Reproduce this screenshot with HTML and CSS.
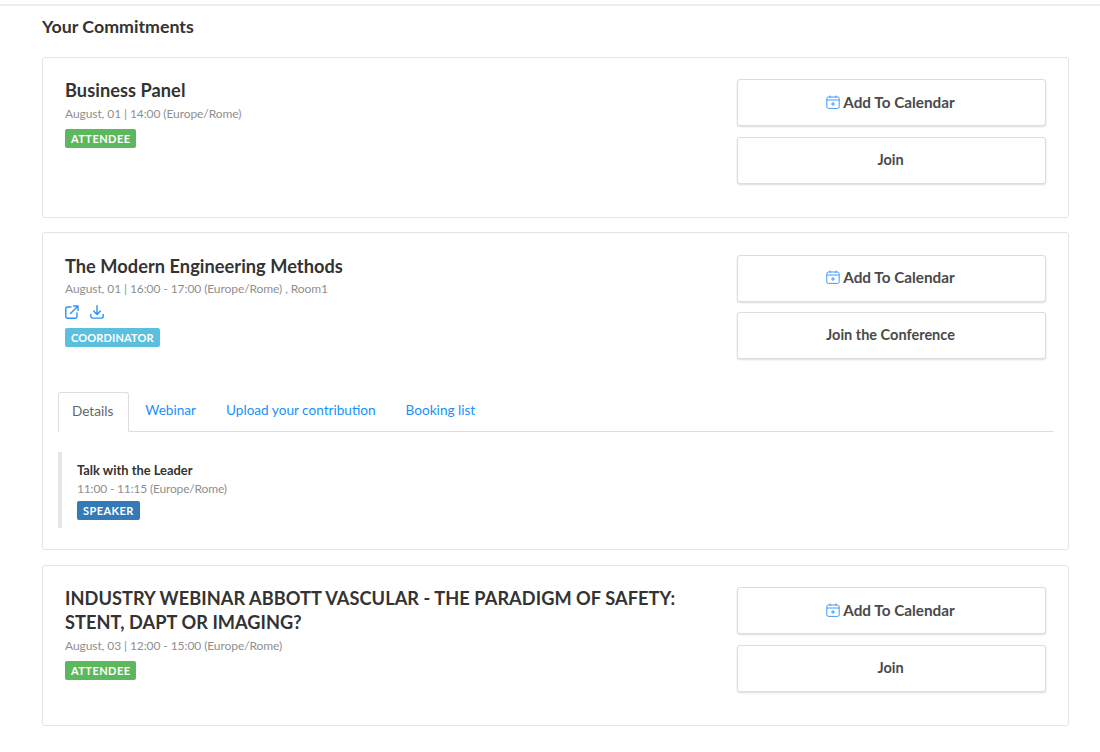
FILE: index.html
```html
<!DOCTYPE html>
<html lang="en">
<head>
<meta charset="utf-8">
<title>Your Commitments</title>
<link rel="stylesheet" href="styles.css">
</head>
<body>
<div class="topline"></div>
<main class="page">
  <h2 class="heading">Your Commitments</h2>

  <section class="card">
    <div class="row">
      <div class="info">
        <h3 class="title">Business Panel</h3>
        <p class="meta">August, 01 | 14:00 (Europe/Rome)</p>
        <span class="badge green">ATTENDEE</span>
      </div>
      <div class="actions">
        <button class="btn btn-cal"><svg class="cal" viewBox="0 0 14 14" width="14" height="14" fill="none" stroke="#3d9bff" stroke-width="1"><rect x="0.8" y="2" width="12.4" height="11.4" rx="1.6"/><path d="M0.8 5h12.4M4 0.5v2.5M10 0.5v2.5M7 7v4M5 9h4"/></svg><span>Add To Calendar</span></button>
        <button class="btn">Join</button>
      </div>
    </div>
  </section>

  <section class="card card-wide">
    <div class="row">
      <div class="info">
        <h3 class="title">The Modern Engineering Methods</h3>
        <p class="meta">August, 01 | 16:00 - 17:00 (Europe/Rome) , Room1</p>
        <div class="links">
          <svg viewBox="0 0 14 14" width="14" height="14" fill="none" stroke="#2e90fa" stroke-width="1.4" stroke-linecap="round" stroke-linejoin="round"><path d="M6 2H2.2A1.4 1.4 0 0 0 .8 3.4v8.4a1.4 1.4 0 0 0 1.4 1.4h8.4a1.4 1.4 0 0 0 1.4-1.4V8"/><path d="M5.5 8.5 13 1M8.6 1H13v4.4"/></svg>
          <svg viewBox="0 0 14 14" width="14" height="14" fill="none" stroke="#2e90fa" stroke-width="1.4" stroke-linecap="round" stroke-linejoin="round"><path d="M7 .8v8.4M3.6 6 7 9.4 10.4 6"/><path d="M.8 9.5v1.8a1.8 1.8 0 0 0 1.8 1.8h8.8a1.8 1.8 0 0 0 1.8-1.8V9.5"/></svg>
        </div>
        <span class="badge cyan">COORDINATOR</span>
      </div>
      <div class="actions">
        <button class="btn btn-cal"><svg class="cal" viewBox="0 0 14 14" width="14" height="14" fill="none" stroke="#3d9bff" stroke-width="1"><rect x="0.8" y="2" width="12.4" height="11.4" rx="1.6"/><path d="M0.8 5h12.4M4 0.5v2.5M10 0.5v2.5M7 7v4M5 9h4"/></svg><span>Add To Calendar</span></button>
        <button class="btn">Join the Conference</button>
      </div>
    </div>
    <nav class="tabs">
      <a class="tab active">Details</a>
      <a class="tab">Webinar</a>
      <a class="tab">Upload your contribution</a>
      <a class="tab">Booking list</a>
    </nav>
    <div class="talk">
      <h4 class="talk-title">Talk with the Leader</h4>
      <p class="meta talk-meta">11:00 - 11:15 (Europe/Rome)</p>
      <span class="badge blue">SPEAKER</span>
    </div>
  </section>

  <section class="card">
    <div class="row">
      <div class="info">
        <h3 class="title">INDUSTRY WEBINAR ABBOTT VASCULAR - THE PARADIGM OF SAFETY: STENT, DAPT OR IMAGING?</h3>
        <p class="meta">August, 03 | 12:00 - 15:00 (Europe/Rome)</p>
        <span class="badge green">ATTENDEE</span>
      </div>
      <div class="actions">
        <button class="btn btn-cal"><svg class="cal" viewBox="0 0 14 14" width="14" height="14" fill="none" stroke="#3d9bff" stroke-width="1"><rect x="0.8" y="2" width="12.4" height="11.4" rx="1.6"/><path d="M0.8 5h12.4M4 0.5v2.5M10 0.5v2.5M7 7v4M5 9h4"/></svg><span>Add To Calendar</span></button>
        <button class="btn">Join</button>
      </div>
    </div>
  </section>
</main>
</body>
</html>
```
FILE: styles.css
```css
* { box-sizing: border-box; }
html, body { margin: 0; padding: 0; background: #fff; }
body { font-family: "Lato", "Open Sans", sans-serif; color: #333; height: 752px; overflow: hidden; }
.topline { height: 6px; border-bottom: 2px solid #eee; }
.page { padding: 0 31px 0 42px; }
.heading { margin: 0; padding-top: 11px; height: 51px; font-size: 17.8px; line-height: 19px; font-weight: 700; color: #333; }
.card { border: 1px solid #e4e4e4; border-radius: 3px; padding: 21px 22px 21px 22px; margin-bottom: 14px; background: #fff; }
.card + .card + .card { margin-top: 15px; }
.row { display: flex; justify-content: space-between; }
.info { width: 625px; min-height: 117px; }
.title { margin: -1px 0 0; font-size: 18.2px; line-height: 24px; font-weight: 700; letter-spacing: .05px; color: #333; }
.meta { margin: 4px 0 0; font-size: 12px; line-height: 16px; letter-spacing: -.08px; color: #8f8f8f; }
.badge { display: block; width: max-content; margin-top: 7px; padding: 0 6px; height: 19px; border-radius: 2px; color: #fff; font-size: 11px; line-height: 19px; font-weight: 700; letter-spacing: .45px; }
.green { background: #5cb85c; }
.cyan { background: #5bc0de; letter-spacing: .14px; }
.blue { background: #337ab7; }
.links { display: flex; gap: 11px; margin-top: 8px; height: 14px; }
.card-wide .title { margin-top: 0; }
.card-wide .meta { margin-top: 3px; }
.links + .badge { margin-top: 9px; }
.actions { width: 309px; display: flex; flex-direction: column; gap: 11px; }
.card-wide .actions { padding-top: 1px; gap: 10px; }
.btn { height: 47px; width: 100%; display: flex; align-items: center; justify-content: center; gap: 3px; background: #fff; border: 1px solid #ddd; border-radius: 3px; box-shadow: 0 1px 2px rgba(0,0,0,.14); font: 700 14.5px/20px "Lato", sans-serif; color: #4a4a4a; padding: 0 2px 1px 0; }
.btn-cal { font-size: 15.3px; padding-bottom: 2px; }
.card-wide .btn-cal { padding-bottom: 3px; }
.cal { flex: none; }
.tabs { display: flex; margin: 21px -7px 0 -7px; border-bottom: 1px solid #ddd; height: 40px; }
.tab { height: 39px; padding: 0 15px; font-size: 13.6px; line-height: 37px; color: #1890ff; }
.tab.active { height: 40px; padding: 0 15px 0 13px; margin-right: 1px; color: #666; background: #fff; border: 1px solid #ddd; border-bottom-color: #fff; border-radius: 3px 3px 0 0; }
.talk { margin: 20px -7px 0 -7px; border-left: 4px solid #e6e6e6; height: 76px; padding: 10px 0 0 15px; }
.talk-title { margin: 0; font-size: 12.9px; line-height: 16px; font-weight: 700; color: #333; }
.talk-meta { margin-top: 3px; letter-spacing: -.17px; }
.talk .badge { margin-top: 4px; }
```
